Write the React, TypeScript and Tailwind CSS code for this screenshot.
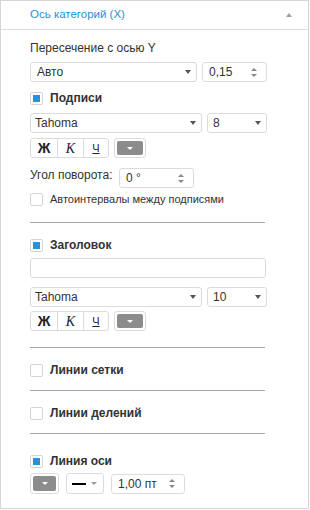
import React from 'react';

const font = { fontFamily: '"Liberation Sans", Arial, sans-serif' };

const Arrow: React.FC = () => (
    <span className="w-0 h-0 border-l-[3px] border-r-[3px] border-t-[4px] border-l-transparent border-r-transparent border-t-[#555]" />
);

const Spin: React.FC = () => (
    <span className="flex flex-col items-center gap-[3px]">
        <span className="w-0 h-0 border-l-[3px] border-r-[3px] border-b-[3px] border-l-transparent border-r-transparent border-b-[#888]" />
        <span className="w-0 h-0 border-l-[3px] border-r-[3px] border-t-[3px] border-l-transparent border-r-transparent border-t-[#888]" />
    </span>
);

const Select: React.FC<{ value: string; w: string; pl?: string }> = ({ value, w, pl = 'pl-[6px]' }) => (
    <div className={`${w} h-[20px] flex items-center justify-between border border-[#dcdcdc] rounded-[3px] bg-white ${pl} pr-[5px] text-[12px] leading-none text-[#333]`}>
        <span>{value}</span>
        <Arrow />
    </div>
);

const SpinBox: React.FC<{ value: string; w: string }> = ({ value, w }) => (
    <div className={`${w} h-[20px] flex items-center justify-between border border-[#dcdcdc] rounded-[3px] bg-white pl-[6px] pr-[9px] text-[12px] leading-none text-[#333]`}>
        <span>{value}</span>
        <Spin />
    </div>
);

const Check: React.FC<{ checked?: boolean; label: string; bold?: boolean }> = ({ checked, label, bold }) => (
    <div className="h-[14px] flex items-center">
        <span className="w-[13px] h-[13px] border border-[#d4d4d4] rounded-[2px] bg-white flex items-center justify-center">
            {checked && <span className="w-[7px] h-[7px] bg-[#2b90d9]" />}
        </span>
        <span className={`ml-[7px] leading-none whitespace-nowrap text-[#333] ${bold ? 'font-bold text-[12px]' : 'text-[11px]'}`}>{label}</span>
    </div>
);

const ColorButton: React.FC<{ w: string; h: string }> = ({ w, h }) => (
    <div className={`${w} ${h} border border-[#dcdcdc] rounded-[3px] bg-white p-[2px]`}>
        <div className="w-full h-full bg-[#8c8c8c] rounded-[2px] flex items-center justify-center">
            <span className="w-0 h-0 border-l-[3px] border-r-[3px] border-t-[3px] border-l-transparent border-r-transparent border-t-white" />
        </div>
    </div>
);

const FontStyle: React.FC = () => (
    <div className="flex items-center gap-[5px]">
        <div className="flex h-[20px] border border-[#dcdcdc] rounded-[3px] bg-white text-[#222]">
            <span className="w-[26px] flex items-center justify-center font-bold text-[14px]" style={{ fontFamily: '"Liberation Sans", sans-serif' }}>Ж</span>
            <span className="w-[26px] flex items-center justify-center border-l border-[#dcdcdc] italic text-[14px]" style={{ fontFamily: '"Liberation Serif", serif' }}>К</span>
            <span className="w-[25px] flex items-center justify-center border-l border-[#dcdcdc] underline text-[11px]">Ч</span>
        </div>
        <ColorButton w="w-[32px]" h="h-[20px]" />
    </div>
);

const Separator: React.FC<{ mt: string }> = ({ mt }) => (
    <div className={`${mt} h-px w-[235px] bg-[#a8a8a8]`} />
);

export default function App() {
    return (
        <div className="w-[309px] h-[509px] border border-[#d6d6d6] bg-white" style={font}>
            <div className="h-[29px] border-b border-[#dedede] flex items-center justify-between pl-[29px] pr-[16px]">
                <span className="text-[11.5px] text-[#2b8fd6]">Ось категорий (X)</span>
                <span className="w-0 h-0 border-l-[3px] border-r-[3px] border-b-[4px] border-l-transparent border-r-transparent border-b-[#a0a0a0]" />
            </div>
            <div className="pl-[29px] flex flex-col">
                <div className="mt-[11px] h-[14px] flex items-center text-[12px] text-[#333]">Пересечение с осью Y</div>
                <div className="mt-[7px] flex gap-[5px]">
                    <Select value="Авто" w="w-[167px]" />
                    <SpinBox value="0,15" w="w-[65px]" />
                </div>
                <div className="mt-[9px]"><Check checked bold label="Подписи" /></div>
                <div className="mt-[8px] flex gap-[5px]">
                    <Select value="Tahoma" w="w-[172px]" pl="pl-[4px]" />
                    <Select value="8" w="w-[60px]" pl="pl-[5px]" />
                </div>
                <div className="mt-[5px]"><FontStyle /></div>
                <div className="mt-[10px] flex items-start gap-[10px] h-[20px]">
                    <span className="w-[79px] text-[12px] leading-none whitespace-nowrap text-[#333] mt-[1px]">Угол поворота:</span>
                    <SpinBox value="0 °" w="w-[75px]" />
                </div>
                <div className="mt-[4px]"><Check label="Автоинтервалы между подписями" /></div>
                <Separator mt="mt-[16px]" />
                <div className="mt-[15px]"><Check checked bold label="Заголовок" /></div>
                <div className="mt-[6px] w-[236px] h-[20px] border border-[#dcdcdc] rounded-[3px] bg-white" />
                <div className="mt-[9px] flex gap-[5px]">
                    <Select value="Tahoma" w="w-[172px]" pl="pl-[4px]" />
                    <Select value="10" w="w-[60px]" pl="pl-[5px]" />
                </div>
                <div className="mt-[4px]"><FontStyle /></div>
                <Separator mt="mt-[16px]" />
                <div className="mt-[15px]"><Check bold label="Линии сетки" /></div>
                <Separator mt="mt-[13px]" />
                <div className="mt-[15px]"><Check bold label="Линии делений" /></div>
                <Separator mt="mt-[13px]" />
                <div className="mt-[20px]"><Check checked bold label="Линия оси" /></div>
                <div className="mt-[5px] flex items-center gap-[7px]">
                    <ColorButton w="w-[29px]" h="h-[21px]" />
                    <div className="w-[38px] h-[21px] border border-[#dcdcdc] rounded-[3px] bg-white flex items-center pl-[5px] pr-[6px] justify-between">
                        <span className="w-[14px] h-[2px] bg-black" />
                        <span className="w-0 h-0 border-l-[3px] border-r-[3px] border-t-[3px] border-l-transparent border-r-transparent border-t-[#999]" />
                    </div>
                    <SpinBox value="1,00 пт" w="w-[74px]" />
                </div>
            </div>
        </div>
    );
}
